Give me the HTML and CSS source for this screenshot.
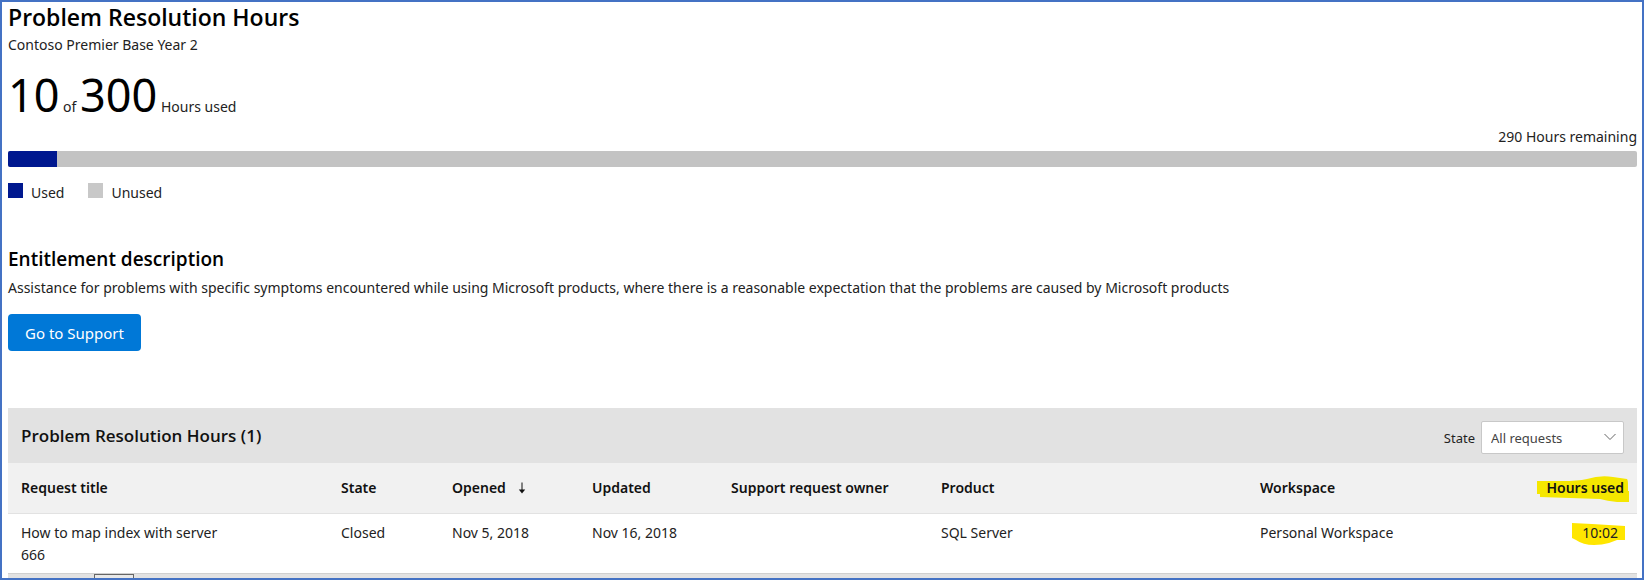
FILE: index.html
```html
<!DOCTYPE html>
<html lang="en">
<head>
<meta charset="utf-8">
<title>Problem Resolution Hours</title>
<link rel="stylesheet" href="styles.css">
</head>
<body>
<main class="page">
  <h1 class="page-title">Problem Resolution Hours</h1>
  <p class="subtitle">Contoso Premier Base Year 2</p>
  <p class="usage"><span class="figure">10</span> of <span class="figure">300</span> Hours used</p>
  <p class="remaining">290 Hours remaining</p>
  <div class="bar"><div class="bar-used" style="width: 3%"></div></div>
  <ul class="legend">
    <li class="legend-item"><span class="swatch swatch-used"></span>Used</li>
    <li class="legend-item"><span class="swatch"></span>Unused</li>
  </ul>

  <h2 class="section-title">Entitlement description</h2>
  <p class="description">Assistance for problems with specific symptoms encountered while using Microsoft products, where there is a reasonable expectation that the problems are caused by Microsoft products</p>
  <button class="support-button" type="button">Go to Support</button>

  <section class="requests">
    <header class="toolbar">
      <h2 class="toolbar-title">Problem Resolution Hours (1)</h2>
      <div class="filter">
        <label for="state">State</label>
        <div class="select-wrap">
          <select id="state" class="select"><option>All requests</option></select>
          <svg class="chevron" viewBox="0 0 12 8" aria-hidden="true"><path d="M0.500 1 6 6.500 11.500 1"/></svg>
        </div>
      </div>
    </header>
    <table class="table">
      <colgroup>
        <col class="col-title"><col class="col-state"><col class="col-opened"><col class="col-updated"><col class="col-owner"><col class="col-product"><col class="col-workspace"><col class="col-hours">
      </colgroup>
      <thead>
        <tr>
          <th>Request title</th>
          <th>State</th>
          <th><span class="sorted">Opened <svg class="sort-arrow" viewBox="0 0 8 12" aria-hidden="true"><path class="stem" d="M4 0.500V9"/><path d="M0.800 7.500H7.200L4 11.500Z"/></svg></span></th>
          <th>Updated</th>
          <th>Support request owner</th>
          <th>Product</th>
          <th>Workspace</th>
          <th class="hours"><span class="marked">
            <svg class="marker marker-head" viewBox="0 0 92 26" aria-hidden="true"><path d="M0 5H26Q40 5 50 3Q63-1 76 1L90 3Q91 4 91 9V15H92V26H80Q70 25 63 23L3 21V18H0Z"/></svg>
            <span class="marked-text">Hours used</span></span></th>
        </tr>
      </thead>
      <tbody>
        <tr>
          <td><span class="request-name">How to map index with server 666</span></td>
          <td>Closed</td>
          <td>Nov 5, 2018</td>
          <td>Nov 16, 2018</td>
          <td></td>
          <td>SQL Server</td>
          <td>Personal Workspace</td>
          <td class="hours hours-value"><span class="marked">
            <svg class="marker marker-value" viewBox="0 0 53 23" aria-hidden="true"><path d="M0 0 20 1 53 3V17H45L37 20Q30 22 22 22Q11 22 4 17L0 15Z"/></svg>
            <span class="marked-text">10:02</span></span></td>
        </tr>
      </tbody>
    </table>
    <footer class="pager"><input class="pager-input" type="text" aria-label="Page"></footer>
  </section>
</main>
</body>
</html>
```
FILE: styles.css
```css
* { box-sizing: border-box; }

body {
  margin: 0;
  font-family: "Noto Sans", "Open Sans", sans-serif;
  font-size: 14px;
  line-height: 22px;
  color: #222;
  background: #fff;
}

h1, h2, p, ul { margin: 0; padding: 0; }

h1, h2 { font-family: "Open Sans", "Noto Sans", sans-serif; }

.page {
  height: 100vh;
  overflow: hidden;
  border: 2px solid #4472c4;
  padding: 0 5px 0 6px;
}

.page-title {
  font-size: 23px;
  line-height: 30px;
  font-weight: 600;
  color: #000;
}

.subtitle { line-height: 26px; }

.usage { margin: 12px 0 6px; }

.figure {
  font-size: 45px;
  line-height: 50px;
  color: #000;
}

.remaining { text-align: right; }

.bar {
  height: 16px;
  margin-top: 3px;
  border-radius: 2px;
  overflow: hidden;
  background: #c3c3c3;
}

.bar-used { height: 100%; background: #00188f; }

.legend {
  display: flex;
  gap: 24px;
  margin-top: 15px;
  list-style: none;
}

.legend-item { display: flex; gap: 8px; }

.swatch {
  width: 15px;
  height: 15px;
  margin-top: 1px;
  background: #c8c8c8;
}

.swatch-used { background: #00188f; }

.section-title {
  margin-top: 40px;
  font-size: 19px;
  line-height: 30px;
  font-weight: 600;
  color: #000;
}

.description { margin-top: 3px; }

.support-button {
  display: block;
  margin-top: 15px;
  height: 37px;
  padding: 0 17px;
  border: 0;
  border-radius: 4px;
  background: #0078d7;
  color: #fff;
  font: inherit;
  font-size: 15px;
}

.requests { margin-top: 57px; }

.toolbar {
  display: flex;
  align-items: center;
  justify-content: space-between;
  height: 55px;
  padding: 0 13px;
  background: #e2e2e2;
}

.toolbar-title { font-size: 17px; font-weight: 600; color: #111; }

.filter {
  display: flex;
  align-items: center;
  gap: 6px;
  margin-top: 4px;
  font-size: 13px;
}

.select-wrap { position: relative; }

.select {
  display: block;
  appearance: none;
  width: 143px;
  height: 33px;
  padding: 0 9px;
  border: 1px solid #c8c8c8;
  border-radius: 2px;
  background: #fff;
  color: #444;
  font: inherit;
}

.chevron {
  position: absolute;
  top: 12px;
  right: 8px;
  width: 12px;
  height: 8px;
  fill: none;
  stroke: #666;
  pointer-events: none;
}

.table {
  width: 100%;
  table-layout: fixed;
  border-collapse: collapse;
}

.col-title { width: 320px; }
.col-state { width: 111px; }
.col-opened { width: 140px; }
.col-updated { width: 139px; }
.col-owner { width: 210px; }
.col-product { width: 319px; }
.col-workspace { width: 250px; }

th, td { padding: 0 0 0 13px; text-align: left; }

th {
  height: 50px;
  background: #f1f1f1;
  border-bottom: 1px solid #e2e2e2;
  font-weight: 600;
  color: #111;
  white-space: nowrap;
}

td {
  height: 60px;
  padding-top: 8px;
  vertical-align: top;
}

.request-name { display: block; max-width: 215px; }

.sorted { display: flex; align-items: center; gap: 12px; }

.sort-arrow { width: 8px; height: 12px; fill: #111; }

.stem { stroke: #111; }

.table .hours { padding-right: 13px; text-align: right; }
.table .hours-value { padding-right: 19px; }

.marked { position: relative; display: inline-block; }

.marked-text { position: relative; }

.marker { position: absolute; fill: #f5e700; }

.marker-head { top: -1px; right: -5px; width: 92px; height: 26px; }

.marker-value { top: 1px; right: -7px; width: 53px; height: 23px; fill: #ffe600; }

.pager {
  height: 40px;
  padding-left: 86px;
  border-top: 1px solid #d0d0d0;
  background: #e2e2e2;
}

.pager-input {
  display: block;
  width: 40px;
  height: 30px;
  border: 1px solid #666;
  background: #e8e8e8;
}
```
